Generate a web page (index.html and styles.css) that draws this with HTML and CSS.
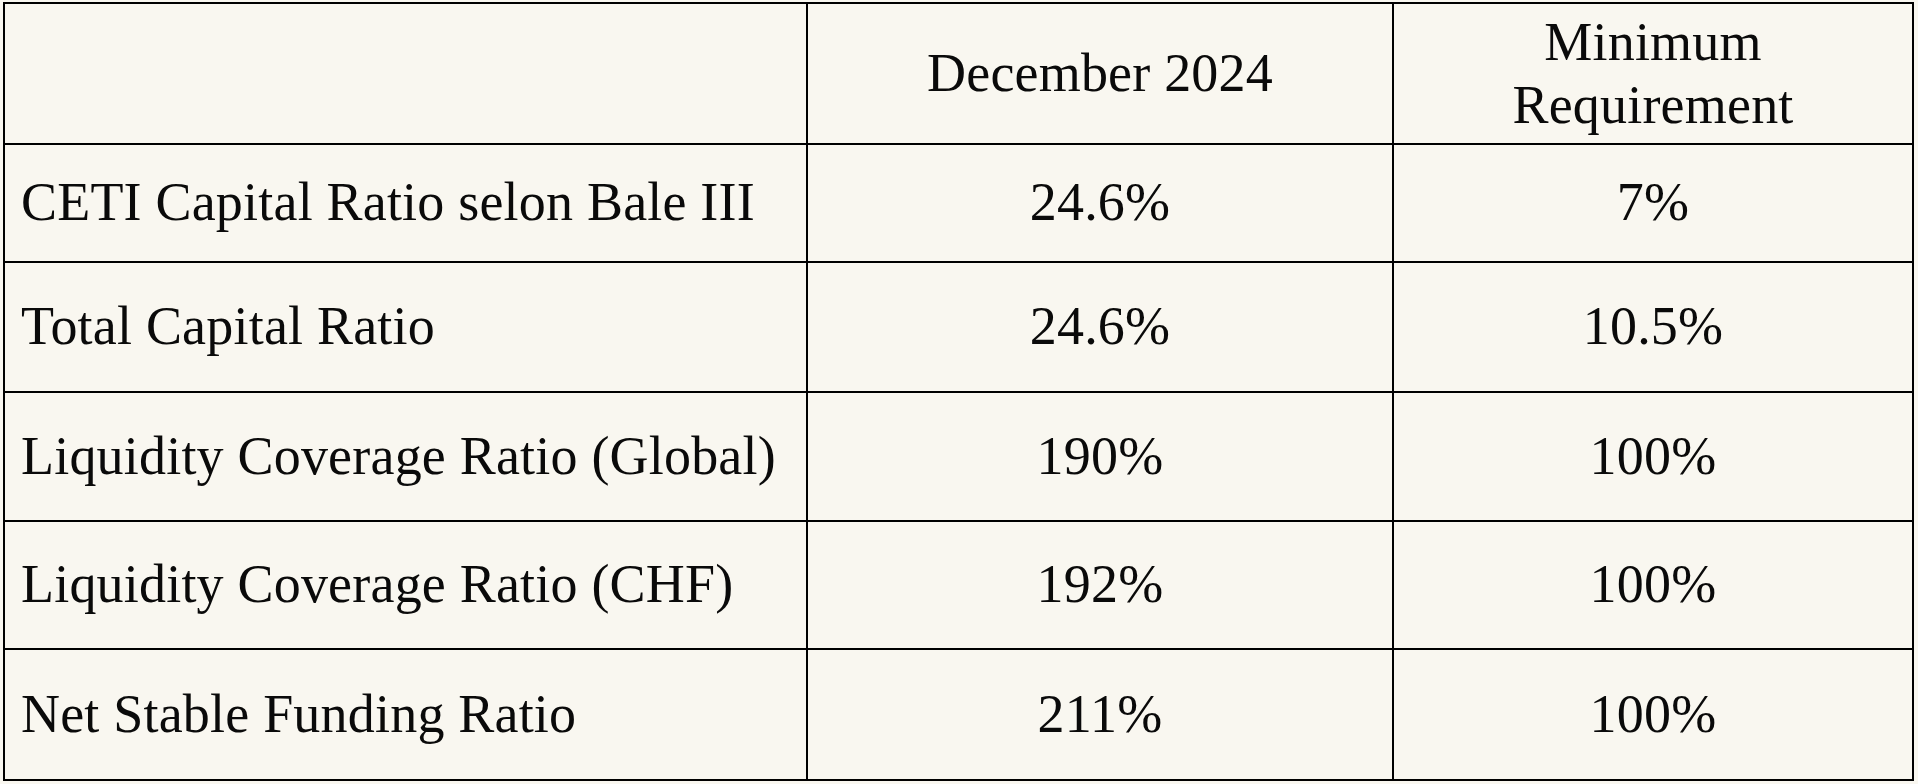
FILE: index.html
```html
<!DOCTYPE html>
<html lang="en">
<head>
<meta charset="utf-8">
<title>Capital ratios</title>
<link rel="stylesheet" href="styles.css">
</head>
<body>
<div class="ratios">
  <div class="cell head label"></div>
  <div class="cell head value">December 2024</div>
  <div class="cell head value">Minimum<br>Requirement</div>

  <div class="cell label">CETI Capital Ratio selon Bale III</div>
  <div class="cell value">24.6%</div>
  <div class="cell value">7%</div>

  <div class="cell label">Total Capital Ratio</div>
  <div class="cell value">24.6%</div>
  <div class="cell value">10.5%</div>

  <div class="cell label">Liquidity Coverage Ratio (Global)</div>
  <div class="cell value">190%</div>
  <div class="cell value">100%</div>

  <div class="cell label">Liquidity Coverage Ratio (CHF)</div>
  <div class="cell value">192%</div>
  <div class="cell value">100%</div>

  <div class="cell label">Net Stable Funding Ratio</div>
  <div class="cell value">211%</div>
  <div class="cell value">100%</div>
</div>
</body>
</html>
```

FILE: styles.css
```css
html, body {
  margin: 0;
  padding: 0;
  background: #f9f7f0;
}

body {
  font-family: "Liberation Serif", "Times New Roman", serif;
  color: #0a0a0a;
}

.ratios {
  display: grid;
  grid-template-columns: 801px 584px 518px;
  grid-template-rows: 139px 116px 128px 127px 126px 129px;
  gap: 2px;
  padding: 2px;
  background: #000;
  width: max-content;
  margin: 2px 0 0 3px;
}

.cell {
  background: #f9f7f0;
  display: flex;
  align-items: center;
  font-size: 54px;
  line-height: 1.1;
  letter-spacing: 0.2px;
}

.head {
  line-height: 1.15;
}

.label {
  padding-left: 16px;
}

.value {
  justify-content: center;
  text-align: center;
}
```
